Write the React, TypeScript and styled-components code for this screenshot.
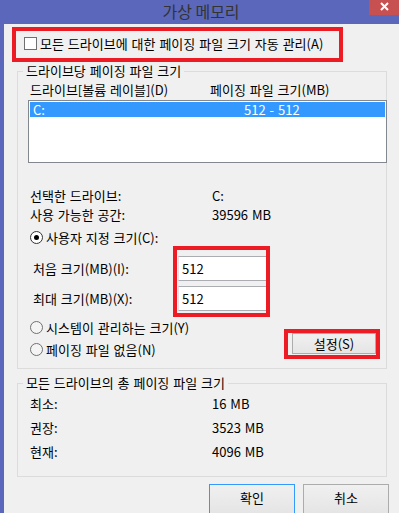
import React from 'react';
import styled, { createGlobalStyle } from 'styled-components';

const GlobalStyle = createGlobalStyle`
  html, body {
    margin: 0;
    padding: 0;
    background: #5a67ba;
  }
  body {
    font-family: "Noto Sans CJK KR", "Noto Sans", sans-serif;
    font-size: 13px;
    word-spacing: 1px;
    color: #000;
  }
  * {
    box-sizing: border-box;
  }
`;

const Window = styled.div`
  position: relative;
  width: 399px;
  height: 513px;
  overflow: hidden;
  background: #5a67ba;
  display: flex;
  flex-direction: column;
`;

const TitleBar = styled.div`
  height: 24px;
  flex-shrink: 0;
  display: flex;
  align-items: center;
  justify-content: center;
  padding: 0 0 2px 3px;
  font-size: 16px;
  word-spacing: 0;
  color: #333;
`;

const CloseButton = styled.div`
  position: absolute;
  top: 0;
  right: 0;
  width: 30px;
  height: 15px;
  background: #c75050;
  display: flex;
  justify-content: center;
  padding-top: 2px;
`;

const Frame = styled.div`
  flex: 1;
  padding-left: 4px;
  display: flex;
`;

const Client = styled.div`
  flex: 1;
  background: #f0f0f0;
  display: flex;
  flex-direction: column;
`;

const Highlight = styled.div`
  border: 4px solid #ed1c24;
`;

const AutoManage = styled(Highlight)`
  margin: 3px 0 0 8px;
  width: 331px;
  height: 35px;
  display: flex;
  align-items: center;
  gap: 3px;
  padding: 5px 0 7px 8px;
  line-height: 15px;
  white-space: nowrap;
`;

const Checkbox = styled.span`
  width: 13px;
  height: 13px;
  flex-shrink: 0;
  border: 1px solid #707070;
  background: #fff;
`;

const Group = styled.fieldset<{ $top: number }>`
  margin: ${p => p.$top}px 12px 0 13px;
  padding: 0;
  min-width: 0;
  border: 1px solid #dcdcdc;
`;

const Legend = styled.legend`
  margin-left: 5px;
  padding: 0 3px;
  line-height: 16px;
`;

const GroupBody = styled.div<{ $pt?: number; $pb?: number }>`
  display: flex;
  flex-direction: column;
  padding: ${p => p.$pt ?? 0}px 0 ${p => p.$pb ?? 0}px 10px;
`;

const HeaderRow = styled.div`
  display: grid;
  grid-template-columns: 180px 1fr;
  padding-left: 2px;
  margin-top: 3px;
  line-height: 15px;
`;

const ListBox = styled.div`
  margin: 3px -1px 0 0;
  height: 63px;
  padding: 1px;
  border: 1px solid #828790;
  background: #fff;
`;

const ListItem = styled.div<{ $selected?: boolean }>`
  display: grid;
  grid-template-columns: 211px 1fr;
  height: 15px;
  line-height: 15px;
  padding-left: 3px;
  background: ${p => (p.$selected ? '#3399ff' : 'transparent')};
  color: ${p => (p.$selected ? '#fff' : '#000')};
`;

const InfoList = styled.div<{ $top: number; $gap: number }>`
  display: flex;
  flex-direction: column;
  gap: ${p => p.$gap}px;
  margin-top: ${p => p.$top}px;
`;

const InfoRow = styled.div`
  display: grid;
  grid-template-columns: 182px 1fr;
  padding-left: 2px;
  line-height: 15px;
`;

const RadioRow = styled.div<{ $top?: number }>`
  display: flex;
  align-items: center;
  gap: 3px;
  padding-left: 2px;
  line-height: 15px;
  margin-top: ${p => p.$top ?? 0}px;
`;

const Radio = styled.span<{ $checked?: boolean }>`
  width: 13px;
  height: 13px;
  flex-shrink: 0;
  border-radius: 50%;
  border: 1px solid ${p => (p.$checked ? '#333' : '#707070')};
  background: ${p => (p.$checked ? '#fff' : '#f4f4f4')};
  display: flex;
  align-items: center;
  justify-content: center;

  &::after {
    content: '';
    width: 5px;
    height: 5px;
    border-radius: 50%;
    background: #000;
    display: ${p => (p.$checked ? 'block' : 'none')};
  }
`;

const SizeSection = styled.div`
  display: flex;
  margin-top: 1px;
`;

const SizeLabels = styled.div`
  width: 145px;
  padding: 10px 0 0 5px;
  display: flex;
  flex-direction: column;
  gap: 5px;
`;

const SizeLabel = styled.div`
  height: 25px;
  line-height: 25px;
`;

const SizeInputs = styled(Highlight)`
  width: 97px;
  height: 71px;
  padding: 6px 0 0 1px;
  display: flex;
  flex-direction: column;
  gap: 5px;
`;

const SizeInput = styled.input`
  width: 88px;
  height: 25px;
  margin: 0;
  padding: 0 3px;
  border: 1px solid #abadb3;
  border-left-color: #e2e3ea;
  border-right: none;
  background: #fff;
  font: inherit;
  color: #000;
  outline: none;
`;

const ModeSection = styled.div`
  display: flex;
  align-items: flex-start;
  padding-bottom: 9px;
`;

const RadioStack = styled.div`
  display: flex;
  flex-direction: column;
  gap: 7px;
  padding-top: 3px;
`;

const SetBox = styled(Highlight)`
  width: 96px;
  height: 30px;
  margin: 12px 6px 0 auto;
  padding-left: 4px;
  overflow: hidden;
`;

const Button = styled.button<{ $default?: boolean; $w: number; $h: number }>`
  width: ${p => p.$w}px;
  height: ${p => p.$h}px;
  flex-shrink: 0;
  margin: 0;
  padding: 0 0 ${p => (p.$h > 24 ? 4 : 1)}px;
  border: 1px solid ${p => (p.$default ? '#3399ff' : '#acacac')};
  background: linear-gradient(#f0f0f0, #e5e5e5);
  font: inherit;
  color: #000;
  line-height: 15px;
`;

const TotalRows = styled.div`
  display: flex;
  flex-direction: column;
  gap: 9px;
`;

const ButtonBar = styled.div`
  display: flex;
  justify-content: flex-end;
  gap: 8px;
  margin-top: 7px;
  padding-right: 10px;
`;

const totals = [
  { label: '최소:', value: '16 MB' },
  { label: '권장:', value: '3523 MB' },
  { label: '현재:', value: '4096 MB' },
];

export default function App() {
  return (
    <>
      <GlobalStyle />
      <Window>
        <TitleBar>가상 메모리</TitleBar>
        <CloseButton>
          <svg width="9" height="9" viewBox="0 0 9 9">
            <path d="M1 1 L8 8 M8 1 L1 8" stroke="#fff" strokeWidth="2" />
          </svg>
        </CloseButton>
        <Frame>
          <Client>
            <AutoManage>
              <Checkbox />
              <span>모든 드라이브에 대한 페이징 파일 크기 자동 관리(A)</span>
            </AutoManage>

            <Group $top={1}>
              <Legend>드라이브당 페이징 파일 크기</Legend>
              <GroupBody>
                <HeaderRow>
                  <span>드라이브[볼륨 레이블](D)</span>
                  <span>페이징 파일 크기(MB)</span>
                </HeaderRow>
                <ListBox>
                  <ListItem $selected>
                    <span>C:</span>
                    <span>512 - 512</span>
                  </ListItem>
                </ListBox>
                <InfoList $top={25} $gap={4}>
                  <InfoRow>
                    <span>선택한 드라이브:</span>
                    <span>C:</span>
                  </InfoRow>
                  <InfoRow>
                    <span>사용 가능한 공간:</span>
                    <span>39596 MB</span>
                  </InfoRow>
                </InfoList>
                <RadioRow $top={8}>
                  <Radio $checked />
                  <span>사용자 지정 크기(C):</span>
                </RadioRow>
                <SizeSection>
                  <SizeLabels>
                    <SizeLabel>처음 크기(MB)(I):</SizeLabel>
                    <SizeLabel>최대 크기(MB)(X):</SizeLabel>
                  </SizeLabels>
                  <SizeInputs>
                    <SizeInput readOnly defaultValue="512" />
                    <SizeInput readOnly defaultValue="512" />
                  </SizeInputs>
                </SizeSection>
                <ModeSection>
                  <RadioStack>
                    <RadioRow>
                      <Radio />
                      <span>시스템이 관리하는 크기(Y)</span>
                    </RadioRow>
                    <RadioRow>
                      <Radio />
                      <span>페이징 파일 없음(N)</span>
                    </RadioRow>
                  </RadioStack>
                  <SetBox>
                    <Button $w={84} $h={21}>설정(S)</Button>
                  </SetBox>
                </ModeSection>
              </GroupBody>
            </Group>

            <Group $top={6}>
              <Legend>모든 드라이브의 총 페이징 파일 크기</Legend>
              <GroupBody $pt={5} $pb={17}>
                <TotalRows>
                  {totals.map(t => (
                    <InfoRow key={t.label}>
                      <span>{t.label}</span>
                      <span>{t.value}</span>
                    </InfoRow>
                  ))}
                </TotalRows>
              </GroupBody>
            </Group>

            <ButtonBar>
              <Button $default $w={86} $h={30}>확인</Button>
              <Button $w={86} $h={30}>취소</Button>
            </ButtonBar>
          </Client>
        </Frame>
      </Window>
    </>
  );
}
